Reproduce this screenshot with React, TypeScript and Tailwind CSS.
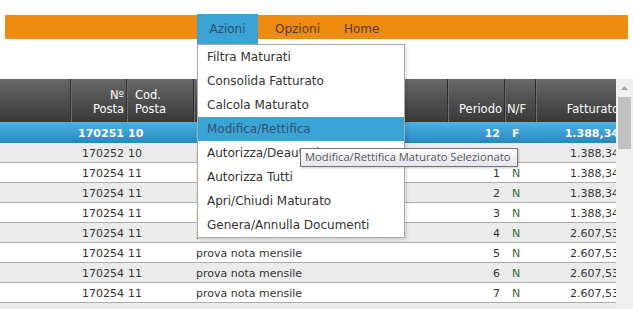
import React from "react";

type Row = {
  posta: string;
  cod: string;
  desc: string;
  periodo: string;
  nf: string;
  fatturato: string;
};

const rows: Row[] = [
  { posta: "170251", cod: "10", desc: "prova nota mensile", periodo: "12", nf: "F", fatturato: "1.388,34" },
  { posta: "170252", cod: "10", desc: "prova nota mensile", periodo: "12", nf: "F", fatturato: "1.388,34" },
  { posta: "170254", cod: "11", desc: "prova nota mensile", periodo: "1", nf: "N", fatturato: "1.388,34" },
  { posta: "170254", cod: "11", desc: "prova nota mensile", periodo: "2", nf: "N", fatturato: "1.388,34" },
  { posta: "170254", cod: "11", desc: "prova nota mensile", periodo: "3", nf: "N", fatturato: "1.388,34" },
  { posta: "170254", cod: "11", desc: "prova nota mensile", periodo: "4", nf: "N", fatturato: "2.607,53" },
  { posta: "170254", cod: "11", desc: "prova nota mensile", periodo: "5", nf: "N", fatturato: "2.607,53" },
  { posta: "170254", cod: "11", desc: "prova nota mensile", periodo: "6", nf: "N", fatturato: "2.607,53" },
  { posta: "170254", cod: "11", desc: "prova nota mensile", periodo: "7", nf: "N", fatturato: "2.607,53" },
  { posta: "170254", cod: "11", desc: "prova nota mensile", periodo: "8", nf: "N", fatturato: "2.607,53" },
];

const voci = [
  "Filtra Maturati",
  "Consolida Fatturato",
  "Calcola Maturato",
  "Modifica/Rettifica",
  "Autorizza/Deautorizza",
  "Autorizza Tutti",
  "Apri/Chiudi Maturato",
  "Genera/Annulla Documenti",
];

const sep = "border-l border-[#2c2c2c] shadow-[inset_1px_0_0_#707070]";

function DataRow({ r, i }: { r: Row; i: number }) {
  const selected = i === 0;
  const base = selected
    ? "h-[21px] bg-gradient-to-b from-[#4cb3e3] to-[#2289c3] text-white font-bold"
    : "h-[20px] border-b border-[#aaaaaa] text-[#333333] " + (i % 2 === 1 ? "bg-[#ebebeb]" : "bg-white");
  return (
    <div className={"flex items-center pt-[2px] text-[11px] leading-[14px] " + base}>
      <div className="w-[70px] shrink-0" />
      <div className="w-[56px] shrink-0 text-right pr-[2px]">{r.posta}</div>
      <div className="w-[67px] shrink-0 pl-[2px]">{r.cod}</div>
      <div className="w-[254px] shrink-0 pl-[3px] whitespace-nowrap">{r.desc}</div>
      <div className="w-[57px] shrink-0 text-right pr-[4px]">{r.periodo}</div>
      <div className={"w-[31px] shrink-0 pl-[8px] " + (selected ? "" : "text-[#2f6b35]")}>{r.nf}</div>
      <div className="w-[87px] shrink-0 text-right pr-[3px]">{r.fatturato}</div>
    </div>
  );
}

export default function App() {
  return (
    <div className="relative w-[633px] h-[309px] overflow-hidden bg-white font-['DejaVu_Sans',Verdana,sans-serif]">
      {/* barra menu */}
      <div className="mt-[15px] mx-[5px] h-[24px] bg-[#ef8b10] flex items-start pl-[192px] text-[12px] text-[#5a3a18]">
        <div className="-mt-px h-[30px] w-[61px] bg-[#3aa4d6] flex items-center justify-center text-[#2f4c6b]">
          Azioni
        </div>
        <div className="-mt-px h-[30px] ml-[17px] flex items-center">Opzioni</div>
        <div className="-mt-px h-[30px] ml-[24px] flex items-center">Home</div>
      </div>

      {/* griglia */}
      <div className="mt-[40px] flex h-[230px]">
        <div className="w-[616px] overflow-hidden">
          <div className="w-[622px]">
            <div className="flex h-[43px] bg-gradient-to-b from-[#686868] to-[#393939] text-white text-[11.5px] leading-[14px]">
              <div className="w-[70px] shrink-0" />
              <div className={"w-[56px] shrink-0 flex items-end justify-end pb-[6px] pr-[2px] text-right " + sep}>
                Nº
                <br />
                Posta
              </div>
              <div className={"w-[67px] shrink-0 flex items-end pb-[6px] pl-[8px] " + sep}>
                Cod.
                <br />
                Posta
              </div>
              <div className={"w-[254px] shrink-0 flex items-end justify-center pb-[6px] " + sep}>Descrizione</div>
              <div className={"w-[57px] shrink-0 flex items-end justify-end pb-[6px] pr-[2px] " + sep}>Periodo</div>
              <div className={"w-[31px] shrink-0 flex items-end pb-[6px] pl-[2px] " + sep}>N/F</div>
              <div className={"w-[87px] shrink-0 flex items-end justify-end pb-[6px] pr-[3px] " + sep}>Fatturato</div>
            </div>
            {rows.map((r, i) => (
              <DataRow key={i} r={r} i={i} />
            ))}
          </div>
        </div>
        <div className="w-[17px] bg-[#f0f0f0] flex flex-col items-center">
          <div className="h-[18px] flex items-center justify-center">
            <svg width="7" height="4" viewBox="0 0 7 4">
              <path d="M0 4 L3.5 0 L7 4 Z" fill="#a3a3a3" />
            </svg>
          </div>
          <div className="w-[13px] h-[52px] bg-[#c1c1c1]" />
        </div>
      </div>

      {/* menu a tendina */}
      <div className="absolute left-[197px] top-[44px] w-[208px] border border-[#a9a9a9] bg-white text-[12px] text-[#333333] shadow-[2px_2px_3px_rgba(0,0,0,0.12)]">
        {voci.map((v, i) => (
          <div
            key={v}
            className={
              "h-[24px] flex items-center pl-[9px] whitespace-nowrap " +
              (i === 3 ? "bg-[#3aa4d6] text-[#34506e]" : "")
            }
          >
            {v}
          </div>
        ))}
      </div>

      {/* tooltip */}
      <div className="absolute left-[300px] top-[148px] w-[218px] h-[19px] border border-[#767676] bg-gradient-to-b from-white to-[#e4e5ee] shadow-[1px_1px_2px_rgba(0,0,0,0.2)] flex items-center pl-[4px] text-[11.2px] text-[#575757] font-['Open_Sans',sans-serif] whitespace-nowrap">
        Modifica/Rettifica Maturato Selezionato
      </div>
    </div>
  );
}
